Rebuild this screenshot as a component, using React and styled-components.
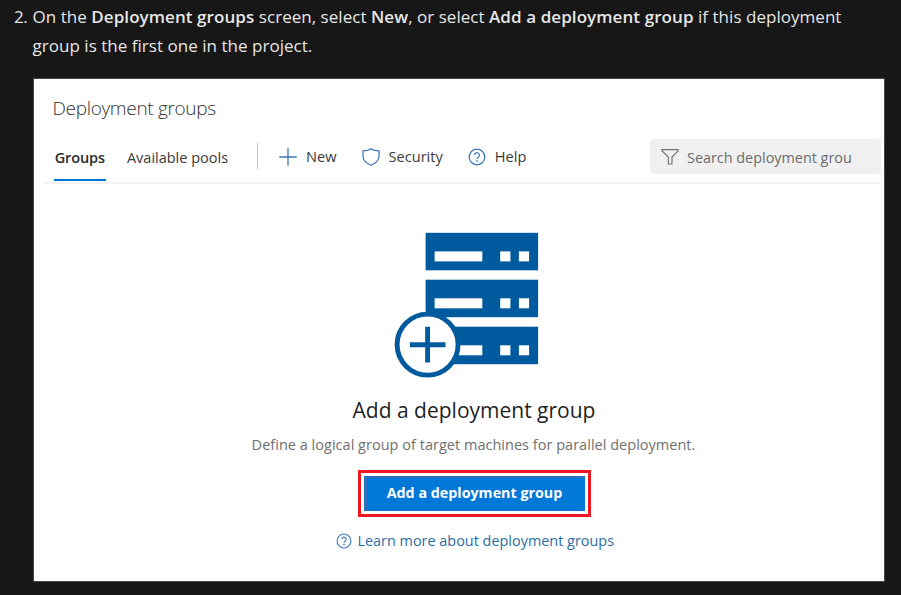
import React from "react";
import styled, { createGlobalStyle } from "styled-components";

const GlobalStyle = createGlobalStyle`
  *, *::before, *::after { box-sizing: border-box; }
  body {
    margin: 0;
    background: #171717;
    color: #e6e6e6;
    font-family: "Open Sans", "Noto Sans", sans-serif;
  }
  #root { height: 595px; overflow: hidden; }
`;

const Article = styled.main`
  width: 901px;
  height: 595px;
  padding: 2px 16px 0 13px;
  overflow: hidden;
`;

const Step = styled.section`
  display: grid;
  grid-template-columns: 20px 852px;
  row-gap: 18px;
`;

const StepNumber = styled.span`
  padding-left: 1px;
  font-size: 17px;
  line-height: 29px;
  letter-spacing: -0.5px;
`;

const Instruction = styled.p`
  margin: 0 0 0 -0.5px;
  font-size: 17px;
  line-height: 29px;
  letter-spacing: 0.03px;
  white-space: nowrap;

  strong {
    font-weight: 600;
    letter-spacing: 0.08px;
  }
`;

const Screen = styled.div`
  grid-column: 2;
  height: 504px;
  border: 1px solid #484848;
  background: #fff;
  color: #333;
`;

const Title = styled.h1`
  margin: 0;
  padding: 16px 0 0 18.5px;
  height: 58px;
  font-size: 19px;
  font-weight: 300;
  line-height: 26px;
  letter-spacing: -0.33px;
  color: #333;
`;

const Toolbar = styled.div`
  display: flex;
  height: 47px;
  margin: 0 3px 0 10px;
  padding-left: 9.5px;
  border-bottom: 2px solid #f2f2f2;
`;

const Tab = styled.span`
  display: flex;
  align-items: center;
  justify-content: center;
  width: ${(p) => (p.$active ? 52.5 : 102)}px;
  height: ${(p) => (p.$active ? 44 : 45)}px;
  margin-right: ${(p) => (p.$active ? 20.5 : 20)}px;
  padding-bottom: ${(p) => (p.$active ? 0 : 4)}px;
  border-bottom: ${(p) => (p.$active ? "2px solid #0078d4" : "0")};
  font-size: 14.5px;
  font-weight: ${(p) => (p.$active ? 600 : 400)};
  line-height: 20px;
  letter-spacing: ${(p) => (p.$active ? -0.12 : 0)}px;
  white-space: nowrap;
  color: ${(p) => (p.$active ? "#2b2b2b" : "#3a3a3a")};
`;

const Divider = styled.span`
  width: 1px;
  height: 26px;
  margin: 6px 21.5px 0 8px;
  background: #c8c8c8;
`;

const Command = styled.span`
  display: flex;
  align-items: center;
  gap: 9px;
  height: 39px;
  margin-right: ${(p) => p.$after}px;
  font-size: 14.6px;
  line-height: 20px;
  white-space: nowrap;
  color: #3a3a3a;

  svg { flex: none; }
`;

const CommandLabel = styled.span`
  padding-bottom: 2px;
`;

const SearchBox = styled.div`
  display: flex;
  align-items: center;
  gap: 8px;
  width: 231.5px;
  height: 35px;
  margin: 2px 0 0 auto;
  padding: 0 0 0 11.5px;
  border-radius: 4px;
  background: #f0f0f0;

  svg { flex: none; }
`;

const SearchText = styled.span`
  padding-top: 2px;
  font-size: 14.4px;
  line-height: 22px;
  white-space: nowrap;
  color: #6c6c6c;
`;

const EmptyState = styled.div`
  display: flex;
  flex-direction: column;
  align-items: center;
  padding: 48px 0 0 31px;
`;

const ServerArt = styled.svg`
  display: block;
  width: 145px;
  height: 146px;
  margin-right: 16px;
`;

const Heading = styled.h2`
  margin: 18px 1px 0 0;
  font-size: 21px;
  font-weight: 400;
  line-height: 29px;
  color: #1f1f1f;
`;

const Description = styled.p`
  margin: 10px 2px 0 0;
  font-size: 14.5px;
  line-height: 20px;
  letter-spacing: 0.02px;
  color: #707070;
`;

const Highlight = styled.div`
  width: 233px;
  height: 47px;
  margin-top: 15px;
  padding: 3px;
  border: 3px solid #ee1620;
`;

const PrimaryButton = styled.button`
  display: block;
  width: 221px;
  height: 35px;
  padding: 0 3px 3px 0;
  border: 0;
  border-top: 2px solid #2b70bf;
  border-left: 3px solid #2b70bf;
  background: #0078d7;
  color: #fff;
  font: 700 14.3px/20px "Open Sans", "Noto Sans", sans-serif;
`;

const LearnMore = styled.span`
  display: flex;
  align-items: center;
  gap: 5px;
  margin: 14px 0 0 1.5px;
  font-size: 14.4px;
  line-height: 20px;
  letter-spacing: 0.02px;
  white-space: nowrap;
  color: #2a6ea6;
`;

const HelpIcon = ({ size }) => (
  <svg width={size} height={size} viewBox="0 0 18 18" fill="none" stroke="#3b78b5" strokeWidth="1.25">
    <circle cx="9" cy="9" r="7.8" />
    <path d="M6.6 7.1a2.4 2.4 0 1 1 3.9 1.9c-.9.7-1.5 1.1-1.5 2.1" />
    <path d="M9 12.2v1.5" strokeWidth="1.5" />
  </svg>
);

const PlusIcon = () => (
  <svg width="18" height="18" viewBox="0 0 18 18" stroke="#3b78b5" strokeWidth="1.3">
    <path d="M9 .3v17.400M.3 9h17.400" />
  </svg>
);

const ShieldIcon = () => (
  <svg width="18" height="18" viewBox="0 0 18 18" fill="none" stroke="#3b78b5" strokeWidth="1.2">
    <path d="M9 .8C7 2.300 4 2.800 1 2.800v5.700C1 12 4 15 9 17.300c5-2.300 8-5.300 8-8.800V2.800c-3 0-6-.5-8-2Z" />
  </svg>
);

const FilterIcon = () => (
  <svg width="18" height="18" viewBox="0 0 18 18" fill="none" stroke="#777078" strokeWidth="1.2">
    <path d="M.9 1.600h16.200v1.200L11 9v7H7.300V9L.9 2.800Z" />
  </svg>
);

const UNIT_TOPS = [232.8, 279.7, 326.7];

const Servers = () => (
  <ServerArt viewBox="394 232 145 146">
    {UNIT_TOPS.map((y) => (
      <g key={y}>
        <rect x="425.6" y={y} width="112.500" height="37.500" fill="#005a9e" />
        <g fill="#fff">
          <rect x="434.600" y={y + 18.600} width="47.700" height="10" />
          <rect x="500.200" y={y + 18.600} width="10.200" height="10" />
          <rect x="518.900" y={y + 18.600} width="10.200" height="10" />
        </g>
      </g>
    ))}
    <circle cx="427.600" cy="344.600" r="30.500" fill="#fff" stroke="#005a9e" strokeWidth="4.900" />
    <path d="M427.600 326.800v35.800M409.900 344.700h35.600" stroke="#005a9e" strokeWidth="4.900" />
  </ServerArt>
);

export default function App() {
  return (
    <>
      <GlobalStyle />
      <Article>
        <Step>
          <StepNumber>2.</StepNumber>
          <Instruction>
            On the <strong>Deployment groups</strong> screen, select <strong>New</strong>, or select{" "}
            <strong>Add a deployment group</strong> if this deployment
            <br />
            group is the first one in the project.
          </Instruction>
          <Screen>
            <Title>Deployment groups</Title>
            <Toolbar>
              <Tab $active>Groups</Tab>
              <Tab>Available pools</Tab>
              <Divider />
              <Command $after={25}><PlusIcon /><CommandLabel>New</CommandLabel></Command>
              <Command $after={25}><ShieldIcon /><CommandLabel>Security</CommandLabel></Command>
              <Command $after={0}><HelpIcon size={18} /><CommandLabel>Help</CommandLabel></Command>
              <SearchBox>
                <FilterIcon />
                <SearchText>Search deployment grou</SearchText>
              </SearchBox>
            </Toolbar>
            <EmptyState>
              <Servers />
              <Heading>Add a deployment group</Heading>
              <Description>Define a logical group of target machines for parallel deployment.</Description>
              <Highlight>
                <PrimaryButton>Add a deployment group</PrimaryButton>
              </Highlight>
              <LearnMore><HelpIcon size={16} />Learn more about deployment groups</LearnMore>
            </EmptyState>
          </Screen>
        </Step>
      </Article>
    </>
  );
}
